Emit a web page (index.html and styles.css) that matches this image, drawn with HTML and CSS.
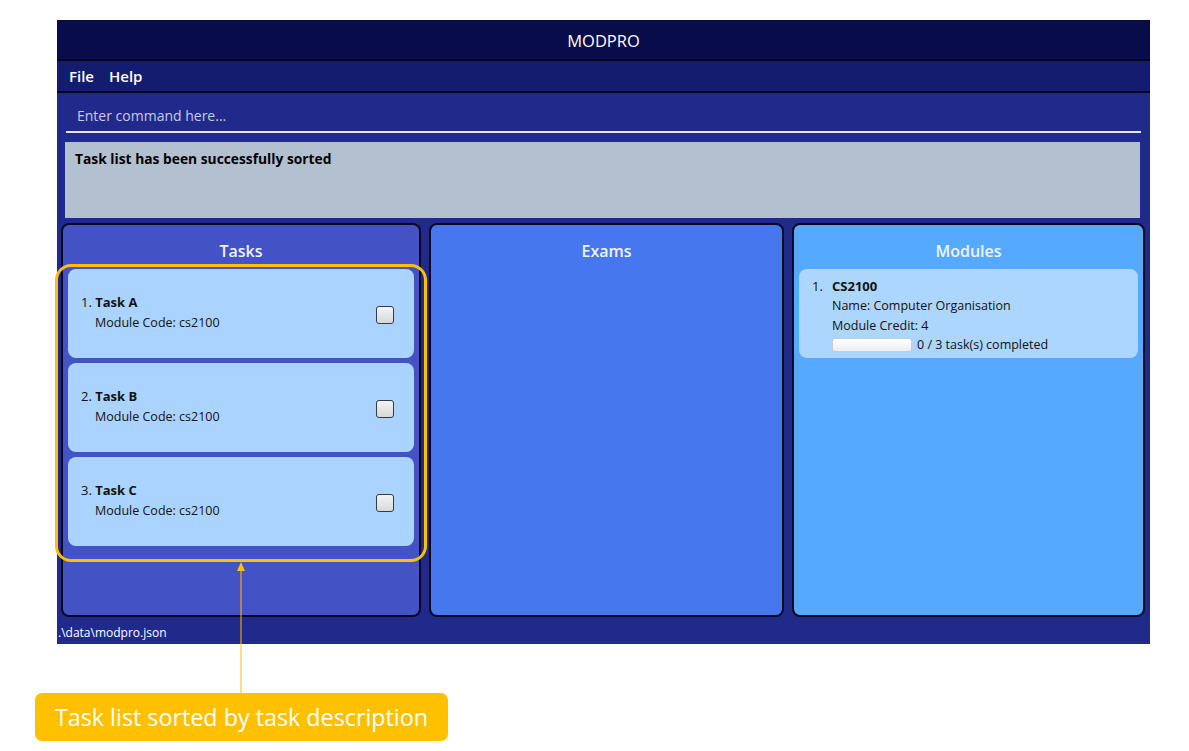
FILE: index.html
```html
<!DOCTYPE html>
<html>
<head>
<meta charset="utf-8">
<link rel="stylesheet" href="styles.css">
</head>
<body>
<div class="stage">
  <div class="app">
    <div class="titlebar">MODPRO</div>
    <div class="menubar"><span>File</span><span>Help</span></div>
    <div class="main">
      <div class="command">Enter command here...</div>
      <div class="result">Task list has been successfully sorted</div>
      <div class="panels">
        <div class="panel tasks">
          <div class="panel-title">Tasks</div>
          <div class="card task">
            <div class="task-text">
              <div class="task-title">1. <b>Task A</b></div>
              <div class="task-sub">Module Code: cs2100</div>
            </div>
            <div class="checkbox"></div>
          </div>
          <div class="card task">
            <div class="task-text">
              <div class="task-title">2. <b>Task B</b></div>
              <div class="task-sub">Module Code: cs2100</div>
            </div>
            <div class="checkbox"></div>
          </div>
          <div class="card task">
            <div class="task-text">
              <div class="task-title">3. <b>Task C</b></div>
              <div class="task-sub">Module Code: cs2100</div>
            </div>
            <div class="checkbox"></div>
          </div>
        </div>
        <div class="panel exams">
          <div class="panel-title">Exams</div>
        </div>
        <div class="panel modules">
          <div class="panel-title">Modules</div>
          <div class="card module">
            <div class="mod-num">1.</div>
            <div class="mod-body">
              <div class="mod-code">CS2100</div>
              <div class="mod-line">Name: Computer Organisation</div>
              <div class="mod-line">Module Credit: 4</div>
              <div class="mod-progress"><div class="bar"></div><span>0 / 3 task(s) completed</span></div>
            </div>
          </div>
        </div>
      </div>
      <div class="status">.\data\modpro.json</div>
    </div>
  </div>
  <div class="highlight"></div>
  <div class="arrow">
    <svg width="12" height="132" viewBox="0 0 12 132"><path d="M6 0 L10 9 L2 9 Z" fill="#ffc000"/><line x1="6" y1="8" x2="6" y2="132" stroke="#ffc000" stroke-width="1"/></svg>
  </div>
  <div class="callout">Task list sorted by task description</div>
</div>
</body>
</html>
```
FILE: styles.css
```css
* { box-sizing: border-box; }
html, body { margin: 0; padding: 0; background: #ffffff; }
body { font-family: "Open Sans", "Noto Sans", sans-serif; }
.stage { position: relative; width: 1189px; height: 751px; padding: 20px 0 0 57px; }
.app { width: 1093px; height: 624px; display: flex; flex-direction: column; background: #1f2a8b; }
.titlebar { height: 41px; background: #080c48; color: #fff; font-size: 16.5px; display: flex; align-items: center; justify-content: center; border-bottom: 2px solid #02041e; padding-top: 1px; }
.menubar { height: 32px; background: #141c70; color: #fff; font-size: 15px; font-weight: 600; display: flex; align-items: center; gap: 15px; padding-left: 12px; border-bottom: 2px solid #02041e; }
.main { flex: 1; display: flex; flex-direction: column; padding: 0 4px 0 4px; }
.command { margin: 0 5px 0 5px; height: 40px; border-bottom: 2px solid #e6e8f8; color: #c7cbe6; font-size: 14px; display: flex; align-items: flex-end; padding: 0 0 6px 11px; }
.result { margin: 9px 6px 0 4px; height: 76px; background: #b3c0d0; color: #000; font-weight: 700; font-size: 13.8px; padding: 7px 10px; }
.panels { display: flex; gap: 8px; height: 394px; margin-top: 5px; }
.panel { border: 2px solid #0a0a1e; border-radius: 8px; display: flex; flex-direction: column; padding: 0 5px; }
.tasks { width: 360px; background: #4352c4; }
.exams { width: 355px; background: #4677ef; }
.modules { width: 353px; background: #55aaff; }
.panel-title { color: #f0f2ff; font-size: 16px; font-weight: 600; text-align: center; height: 44px; padding-top: 15px; }
.card { background: #aad4ff; border-radius: 8px; }
.task { height: 89px; margin-bottom: 5px; display: flex; align-items: flex-start; padding: 24px 20px 0 13px; justify-content: space-between; }
.task-title { font-size: 13px; color: #111; }
.task-title b { font-weight: 700; }
.task-sub { font-size: 12.5px; color: #111; padding-left: 14px; margin-top: 3px; }
.checkbox { width: 18px; height: 18px; border: 1.5px solid #333a48; border-radius: 3px; background: linear-gradient(#f4f4f4, #d8d8d8); margin-top: 13px; }
.module { background: #add6ff; height: 89px; display: flex; padding: 8px 0 0 13px; }
.mod-num { font-size: 13px; color: #111; width: 20px; }
.mod-code { font-size: 13px; font-weight: 700; color: #111; }
.mod-line { font-size: 12.5px; color: #111; margin-top: 2px; line-height: 17.5px; }
.mod-progress { display: flex; align-items: center; gap: 5px; font-size: 12.5px; color: #111; margin-top: 2px; line-height: 17.5px; }
.bar { width: 80px; height: 14px; border-radius: 3px; background: linear-gradient(#ffffff, #eceef2); border: 1px solid #c4ccd8; }
.status { color: #fff; font-size: 12px; padding: 7px 0 0 1px; margin-left: -4px; }
.highlight { position: absolute; left: 55px; top: 264px; width: 372px; height: 298px; border: 3px solid #ffc000; border-radius: 16px; }
.arrow { position: absolute; left: 235px; top: 562px; width: 12px; height: 132px; }
.arrow svg { display: block; }
.callout { position: absolute; left: 35px; top: 693px; width: 413px; height: 48px; background: #ffc000; border-radius: 7px; color: #fff; font-size: 23.3px; display: flex; align-items: center; justify-content: center; }
```
